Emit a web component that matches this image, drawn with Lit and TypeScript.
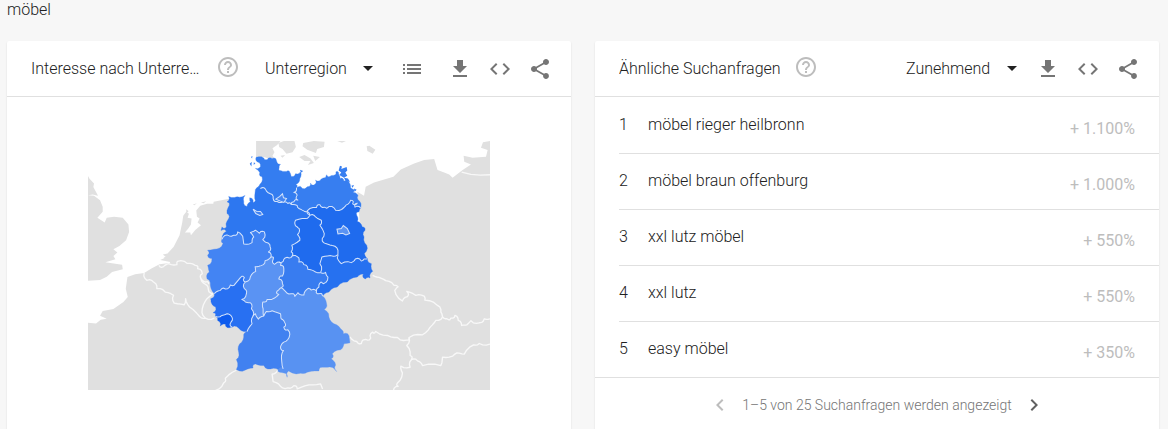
import { LitElement, css, html, svg } from "lit";
import { customElement, property } from "lit/decorators.js";

type Point = [number, number];

const parse = (s: string): Point[] =>
  s.trim().split(/\s+/).map((p) => p.split(",").map(Number) as Point);

/** Splits each segment in three and nudges the new points sideways, so borders look surveyed. */
const roughen = (points: Point[], amount = 4): Point[] => {
  const out: Point[] = [points[0]];
  for (let i = 1; i < points.length; i++) {
    const [ax, ay] = points[i - 1];
    const [bx, by] = points[i];
    const length = Math.hypot(bx - ax, by - ay);
    if (length > 9) {
      for (const t of [1 / 3, 2 / 3]) {
        const n = Math.sin(ax * 12.9 + by * 78.2 + t * 37.7) * amount;
        out.push([
          Math.round(ax + (bx - ax) * t - ((by - ay) / length) * n),
          Math.round(ay + (by - ay) * t + ((bx - ax) / length) * n),
        ]);
      }
    }
    out.push([bx, by]);
  }
  return out;
};

const line = (points: Point[]) => "M" + points.map((p) => p.join(" ")).join("L");

/** Outer edges of the states. */
const OUTER: Record<string, string> = {
  shCoast: "180,160 170,158 178,148 185,125 178,112 165,100 180,95 170,80 167,67 190,69 200,74 215,70 228,77 240,88 236,98 242,107 258,109 268,112 272,124 285,116 300,110 298,130 286,148 288,158",
  niCoast: "180,160 165,163 163,190 158,202 148,188 150,200 140,214 130,198 134,181 110,185 85,184 80,200 87,210 80,235 85,250 78,275 65,275 62,286 78,288 65,312",
  mvCoast: "288,158 300,154 306,160 320,155 330,144 340,150 345,135 358,137 365,130 375,127 378,119 388,124 398,121 406,110 414,117 418,130 430,138 438,136 450,158 462,164 458,172 472,180 478,200 480,218",
  bbEast: "480,218 475,230 468,240 470,258 485,275 493,285 490,305 498,330 491,355 500,370",
  nwWest: "65,312 68,325 50,341 22,345 22,360 35,370 22,390 27,410 20,430 30,450 42,475",
  rpWest: "42,475 31,490 33,502 46,515 38,532 45,542",
  slSouth: "45,542 52,555 60,572 75,566 86,577 95,575",
  rpSouth: "95,575 115,578 140,588",
  snSouth: "500,370 512,385 516,408 508,428 494,431 488,416 470,425 440,440 410,455 385,470 366,482",
  byEdge: "366,482 378,505 371,522 385,545 400,565 420,580 428,595 445,601 448,622 430,625 420,643 395,655 392,670 405,688 408,708 388,694 365,695 355,706 320,710 300,713 264,706 260,725 250,712 232,707 238,698 248,700",
  bwEdge: "140,588 130,605 118,625 115,650 108,672 108,702 135,703 158,697 165,685 190,690 210,700 235,703 248,700",
};

/** Borders between two states. */
const INNER: Record<string, string> = {
  shNi: "180,160 195,162 208,175 218,190 230,199 248,200 262,205 272,208",
  shMv: "272,208 280,200 292,195 290,180 280,172 288,158",
  mvNi: "272,208 290,211 300,222 316,230 328,240",
  mvBb: "328,240 320,227 348,217 358,209 372,216 385,214 405,225 430,217 436,210 450,195 456,206 470,204 463,216 480,218",
  bbSt: "328,240 345,245 362,255 358,270 368,287 365,310 375,325 395,331 412,345 412,358",
  bbSn: "412,358 410,368 422,385 452,382 464,371 482,377 490,371 500,370",
  snSt: "412,358 390,361 364,365 358,385 360,412",
  stNi: "328,240 315,250 285,255 285,272 296,280 291,298 298,315 274,330 272,350 275,362",
  stTh: "275,362 290,364 295,380 310,388 322,402 345,410 360,412",
  niTh: "275,362 260,366 248,378 235,380",
  niHe: "235,380 222,387 218,372 212,365",
  niNw: "212,365 204,350 209,335 196,321 187,313 192,290 177,294 165,285 150,292 160,305 155,322 130,326 127,303 112,290 100,300 80,299 65,312",
  nwRp: "42,475 60,465 75,461 90,449 105,445 120,427 132,427 135,440",
  nwHe: "135,440 150,424 166,408 164,394 182,391 194,376 212,365",
  rpHe: "135,440 132,460 138,475 124,492 135,500 150,502 153,520 158,542",
  rpSl: "45,542 65,540 80,535 93,542 92,560 95,575",
  rpBw: "158,542 155,565 140,588",
  heBw: "158,542 165,535 174,551 190,542",
  heBy: "190,542 188,520 187,500 200,492 214,492 235,477 230,467 242,457",
  heTh: "242,457 246,445 235,431 246,422 250,400 240,390 235,380",
  thBy: "242,457 255,468 272,475 283,483 292,472 310,479 318,463 332,464 348,467",
  thSn: "360,412 375,411 382,425 368,445 362,440 355,455 348,467",
  snBy: "348,467 355,475 366,482",
  bwBy: "190,542 198,528 215,526 240,535 242,550 252,560 250,575 262,583 266,605 250,620 240,635 249,645 243,668 248,700",
};

const ARCS: Record<string, Point[]> = Object.fromEntries(
  Object.entries({ ...OUTER, ...INNER }).map(([name, s]) => [name, roughen(parse(s))]),
);

/** Joins arcs into a ring; a leading "-" walks the arc backwards. */
const ring = (names: string) =>
  line(
    names.split(" ").flatMap((n) => (n.startsWith("-") ? [...ARCS[n.slice(1)]].reverse() : ARCS[n])),
  ) + "Z";

const STATES = [
  { name: "Schleswig-Holstein", fill: "#347df0", arcs: "shCoast -shMv -shNi" },
  { name: "Mecklenburg-Vorpommern", fill: "#377ef0", arcs: "mvCoast -mvBb -mvNi shMv" },
  { name: "Niedersachsen", fill: "#2d77f0", arcs: "shNi mvNi stNi niTh niHe niNw -niCoast" },
  { name: "Brandenburg", fill: "#1f6bee", arcs: "mvBb bbEast -bbSn -bbSt" },
  { name: "Sachsen-Anhalt", fill: "#1f6bee", arcs: "bbSt snSt -stTh -stNi" },
  { name: "Sachsen", fill: "#2671f0", arcs: "bbSn snSouth -snBy -thSn -snSt" },
  { name: "Thüringen", fill: "#387cf0", arcs: "stTh thSn -thBy heTh -niTh" },
  { name: "Hessen", fill: "#5a93f3", arcs: "-heTh -heBy -heBw -rpHe nwHe -niHe" },
  { name: "Nordrhein-Westfalen", fill: "#4384f3", arcs: "niNw nwWest nwRp nwHe" },
  { name: "Rheinland-Pfalz", fill: "#2870f2", arcs: "nwRp rpHe rpBw -rpSouth -rpSl -rpWest" },
  { name: "Saarland", fill: "#0d5bee", arcs: "rpSl -slSouth" },
  { name: "Baden-Württemberg", fill: "#4181f0", arcs: "heBw bwBy -bwEdge -rpBw" },
  { name: "Bayern", fill: "#5892f2", arcs: "heBy thBy snBy byEdge -bwBy" },
];

const WEST_LAND = [
  // Northern and eastern England
  "M20 116L28 130L42 145L40 156L54 182L38 178L24 180ZM24 180L42 182L60 195L68 215L68 230L52 248L74 262L80 248L102 245L128 248L145 268L147 290L138 315L118 332L100 342L112 352L100 362L106 372L76 381L126 388L128 402L96 410L80 424L60 434L24 436Z",
  // France, Belgium
  "M24 562L48 564L62 553L80 550L60 541L68 527L100 521L130 500L143 485L137 460L142 425L165 417L192 413L215 399L238 387L262 384L420 380V765H24Z",
  // Netherlands
  "M240 374L258 366L248 358L262 355L280 335L298 300L306 262L309 242L318 230L326 236L322 248L334 250L332 268L324 280L314 292L330 292L332 300L345 284L362 270L352 262L358 250L350 245L348 226L360 212L380 206L400 206L420 198L450 192V400H262L270 380Z",
  "M250 367L262 362L282 368L268 374ZM318 222L325 228L318 234ZM338 208L350 204L342 210ZM362 202L378 198L370 204Z",
];

const WEST_BORDERS = [
  "192,413 200,435 220,440 230,460 255,470 280,480 282,503 312,508 316,490 328,515 358,543 375,548 402,548",
  "236,390 250,394 265,385 290,388 292,378 320,384 345,390 352,400 366,415 362,430 376,440 385,446",
  "375,548 366,520 380,490 398,475",
  "362,430 374,446 384,462 398,475",
];

const EAST_LAND =
  "M50 170L70 182L75 155L100 142L158 125L180 103L220 85L250 75L280 72L290 105L310 112L325 118L335 128L365 105L390 88L370 80L368 62L395 68L435 65L440 45L420 38L426 22L447 18V765H-300V300H60ZM78 34L86 32L104 44L96 56L80 48Z";

const EAST_BORDERS = [
  "96,420 115,426 135,436 160,450 172,454 162,465 185,497 200,484 198,468 225,480 250,482 252,494 290,510 300,530 305,545",
  "305,545 318,550 330,548 342,540 352,555 362,570 378,568 390,556 415,562 430,550 447,550",
  "305,545 285,555 268,575 245,598 205,606 198,614 170,606 140,600 105,588 95,590 90,608 75,612 62,624 48,618 28,604",
  "205,606 198,630 208,660 212,672 230,676 245,690 300,690 305,665 335,662 348,652 370,656 398,628 415,624 447,626",
  "212,672 208,695 180,692 185,712 170,742 172,752 158,765",
  "362,111 447,119",
];

const DENMARK =
  "M167 18H240L230 30L216 40L222 52L216 62L222 70L205 70L190 66L167 66ZM234 24L250 18H282L286 36L276 52L258 56L246 42L236 36ZM240 62L254 60L246 68ZM308 24L340 18L372 20L370 36L350 42L346 54L320 44L306 34ZM296 66L312 60L330 70L340 84L322 90L330 78L312 78ZM338 62L358 66L344 78ZM410 18H436L424 23Z";

const COAST_ISLANDS =
  "M152 66L156 62L155 70ZM148 86L154 80L153 94ZM160 82L165 84L160 90ZM418 92L424 94L422 102L438 96L440 106L434 112L440 122L430 128L416 120L422 112L414 106ZM430 128L442 130L448 140L436 140ZM452 152L460 150L456 158ZM460 160L468 164L462 170ZM298 104L308 108L302 112Z";

const SOUTH_BORDERS = [
  "45,765 70,742 75,728 108,704",
  "248,700 232,704 215,716 218,738 240,752 262,757 280,750 290,760 325,748 360,745 366,760",
  "190,690 196,682 210,700",
];

const CITIES = [
  { name: "Hamburg", fill: "#4586f1", d: "M226 192L238 184L246 176L249 188L258 190L250 202L240 198Z" },
  { name: "Bremen", fill: "#3f81f2", d: "M158 222L168 228L180 229L187 238L178 241L166 235Z" },
  { name: "Berlin", fill: "#5a93f3", d: "M412 296L409 282L422 280L428 271L440 280L447 295L436 299L426 294Z" },
];

const ICONS = {
  help: "M11 18h2v-2h-2v2zm1-16C6.48 2 2 6.48 2 12s4.48 10 10 10 10-4.48 10-10S17.52 2 12 2zm0 18c-4.41 0-8-3.59-8-8s3.59-8 8-8 8 3.59 8 8-3.59 8-8 8zm0-14c-2.21 0-4 1.790-4 4h2c0-1.100.9-2 2-2s2 .9 2 2c0 2-3 1.750-3 5h2c0-2.250 3-2.500 3-5 0-2.210-1.790-4-4-4z",
  list: "M3 7h2v-2h-2zM3 11h2v-2h-2zM3 15h2v-2h-2zM7 5v2h14v-2zM7 9v2h14v-2zM7 13v2h14v-2z",
  download: "M19 9h-4V3H9v6H5l7 7 7-7zM5 18v2h14v-2H5z",
  embed: "M9.400 16.600L4.800 12l4.600-4.600L8 6l-6 6 6 6 1.400-1.400zm5.200 0l4.600-4.600-4.600-4.600L16 6l6 6-6 6-1.400-1.400z",
  share: "M18 16.080c-.76 0-1.440.3-1.960.77L8.910 12.700c.05-.23.09-.46.09-.7s-.04-.47-.09-.7l7.050-4.110c.54.5 1.250.81 2.040.81 1.660 0 3-1.340 3-3s-1.340-3-3-3-3 1.340-3 3c0 .24.04.47.09.7L8.040 9.810C7.500 9.310 6.790 9 6 9c-1.660 0-3 1.340-3 3s1.340 3 3 3c.79 0 1.500-.31 2.040-.81l7.120 4.160c-.05.21-.08.43-.08.65 0 1.610 1.310 2.920 2.920 2.920s2.920-1.310 2.920-2.920-1.310-2.920-2.920-2.920z",
  prev: "M15.410 7.410L14 6l-6 6 6 6 1.410-1.410L10.830 12z",
  next: "M10 6L8.590 7.410 13.170 12l-4.580 4.590L10 18l6-6z",
};

const icon = (name: keyof typeof ICONS) => html`
  <svg viewBox="0 0 24 24" width="24" height="24" fill="currentColor" aria-hidden="true">
    <path d=${ICONS[name]}></path>
  </svg>
`;

const buttonStyles = css`
  button {
    display: flex;
    align-items: center;
    justify-content: center;
    padding: 0;
    border: 0;
    background: none;
    color: #757575;
    cursor: pointer;
  }
  svg {
    display: block;
    flex: none;
  }
`;

@customElement("region-map")
export class RegionMap extends LitElement {
  static styles = css`
    :host {
      display: block;
    }
    .map {
      display: block;
      width: 100%;
      height: auto;
    }
    .land {
      fill: #e0e0e0;
    }
    .country {
      fill: none;
      stroke: #f8f8f8;
      stroke-width: 4;
      stroke-linejoin: round;
    }
    .state {
      fill: none;
      stroke: #d4e3fb;
      stroke-width: 3;
      stroke-linejoin: round;
    }
  `;

  render() {
    const border = (s: string) => svg`<path class="country" d=${line(roughen(parse(s)))}></path>`;
    return html`
      <svg class="map" viewBox="-336 18 1203 744" role="img" aria-label="Deutschland">
        <g transform="translate(-360 0)">
          ${WEST_LAND.map((d) => svg`<path class="land" d=${d}></path>`)}
        </g>
        <g transform="translate(420 0)"><path class="land" d=${EAST_LAND}></path></g>
        <path class="land" d="M40 200L90 190V320L420 300H500V765H20V320Z"></path>
        <path class="land" d=${DENMARK}></path>
        <g transform="translate(-360 0)">${WEST_BORDERS.map(border)}</g>
        <g transform="translate(420 0)">${EAST_BORDERS.map(border)}</g>
        ${SOUTH_BORDERS.map(border)}
        ${STATES.map(
          (s) => svg`<path d=${ring(s.arcs)} fill=${s.fill} stroke=${s.fill}><title>${s.name}</title></path>`,
        )}
        <path d=${COAST_ISLANDS} fill="#377ef0"></path>
        ${Object.keys(INNER).map((name) => svg`<path class="state" d=${line(ARCS[name])}></path>`)}
        ${CITIES.map(
          (c) => svg`<path d=${c.d} fill=${c.fill} stroke="#d4e3fb" stroke-width="3"><title>${c.name}</title></path>`,
        )}
      </svg>
    `;
  }
}

@customElement("widget-card")
export class WidgetCard extends LitElement {
  @property() heading = "";
  @property() choice = "";
  @property({ type: Boolean }) listable = false;

  static styles = [
    buttonStyles,
    css`
      :host {
        display: block;
        min-width: 0;
        background: #fff;
        border-radius: 2px;
        box-shadow: 0 1px 2px rgba(0, 0, 0, 0.12);
      }
      .header {
        display: flex;
        align-items: center;
        height: 55px;
        padding: 0 11px 0 24px;
        border-bottom: 1px solid #e0e0e0;
      }
      .title {
        margin: 0;
        min-width: 0;
        overflow: hidden;
        text-overflow: ellipsis;
        white-space: nowrap;
        font-size: 16px;
        font-weight: 300;
        line-height: 24px;
      }
      .help {
        flex: none;
        width: 24px;
        margin: 0 25px 0 13px;
        padding-bottom: 4px;
        color: #bdbdbd;
      }
      .picker {
        position: relative;
        display: flex;
        align-items: center;
        flex: none;
        margin-left: auto;
      }
      .select {
        appearance: none;
        margin: 0;
        padding: 0 37px 0 0;
        border: 0;
        background: none;
        color: inherit;
        font: 300 16px/24px Roboto, sans-serif;
      }
      .arrow {
        position: absolute;
        right: 11px;
        color: #212121;
        pointer-events: none;
      }
      .tool {
        flex: none;
        width: 40px;
        height: 40px;
      }
      .list {
        margin: 0 8px;
        padding-top: 4px;
      }
    `,
  ];

  render() {
    return html`
      <header class="header">
        <h2 class="title">${this.heading}</h2>
        <button class="help" aria-label="Hilfe">${icon("help")}</button>
        <div class="picker">
          <select class="select" aria-label=${this.heading}>
            <option>${this.choice}</option>
          </select>
          <svg class="arrow" width="10" height="5" viewBox="0 0 10 5" aria-hidden="true">
            <path d="M0 0h10L5 5z" fill="currentColor"></path>
          </svg>
        </div>
        ${this.listable
          ? html`<button class="tool list" aria-label="Liste">${icon("list")}</button>`
          : null}
        <button class="tool" aria-label="Herunterladen">${icon("download")}</button>
        <button class="tool" aria-label="Einbetten">${icon("embed")}</button>
        <button class="tool" aria-label="Teilen">${icon("share")}</button>
      </header>
      <slot></slot>
    `;
  }
}

const QUERIES = [
  { term: "möbel rieger heilbronn", change: "+ 1.100%" },
  { term: "möbel braun offenburg", change: "+ 1.000%" },
  { term: "xxl lutz möbel", change: "+ 550%" },
  { term: "xxl lutz", change: "+ 550%" },
  { term: "easy möbel", change: "+ 350%" },
];

@customElement("app-root")
export class AppRoot extends LitElement {
  static styles = [
    buttonStyles,
    css`
      :host {
        display: block;
        box-sizing: border-box;
        height: 100vh;
        overflow: hidden;
        padding: 0 9px 0 7px;
        background: #f7f7f7;
        color: #212121;
        font: 300 16px/24px Roboto, sans-serif;
      }
      .term {
        margin: 0;
        padding: 0 0 21px;
        font-size: 16px;
        font-weight: 300;
        line-height: 20px;
      }
      .cards {
        display: grid;
        grid-template-columns: 1fr 1fr;
        gap: 24px;
      }
      .region {
        max-width: 402px;
        margin: 44px auto;
      }
      .queries {
        margin: 0;
        padding: 1px 0 0;
        list-style: none;
      }
      .query {
        display: flex;
        align-items: center;
        height: 55px;
        margin-left: 24px;
        padding-right: 24px;
        border-bottom: 1px solid #e0e0e0;
      }
      .query:last-child {
        margin-left: 0;
        padding-left: 24px;
      }
      .rank,
      .link {
        padding-bottom: 2px;
      }
      .rank {
        width: 29px;
      }
      .link {
        flex: 1;
        color: inherit;
        text-decoration: none;
      }
      .change {
        padding-top: 6px;
        color: #bdbdbd;
        font-weight: 400;
      }
      .pager {
        display: flex;
        align-items: center;
        justify-content: center;
        gap: 10px;
        height: 54px;
        color: #757575;
        font-size: 14px;
      }
      .prev {
        color: #bdbdbd;
      }
      .next {
        color: #616161;
      }
    `,
  ];

  render() {
    return html`
      <h1 class="term">möbel</h1>
      <main class="cards">
        <widget-card heading="Interesse nach Unterregion" choice="Unterregion" listable>
          <region-map class="region"></region-map>
        </widget-card>
        <widget-card heading="Ähnliche Suchanfragen" choice="Zunehmend">
          <ol class="queries">
            ${QUERIES.map(
              (q, i) => html`
                <li class="query">
                  <span class="rank">${i + 1}</span>
                  <a class="link" href="#">${q.term}</a>
                  <span class="change">${q.change}</span>
                </li>
              `,
            )}
          </ol>
          <nav class="pager" aria-label="Seiten">
            <button class="prev" aria-label="Zurück" disabled>${icon("prev")}</button>
            <span>1–5 von 25 Suchanfragen werden angezeigt</span>
            <button class="next" aria-label="Weiter">${icon("next")}</button>
          </nav>
        </widget-card>
      </main>
    `;
  }
}
